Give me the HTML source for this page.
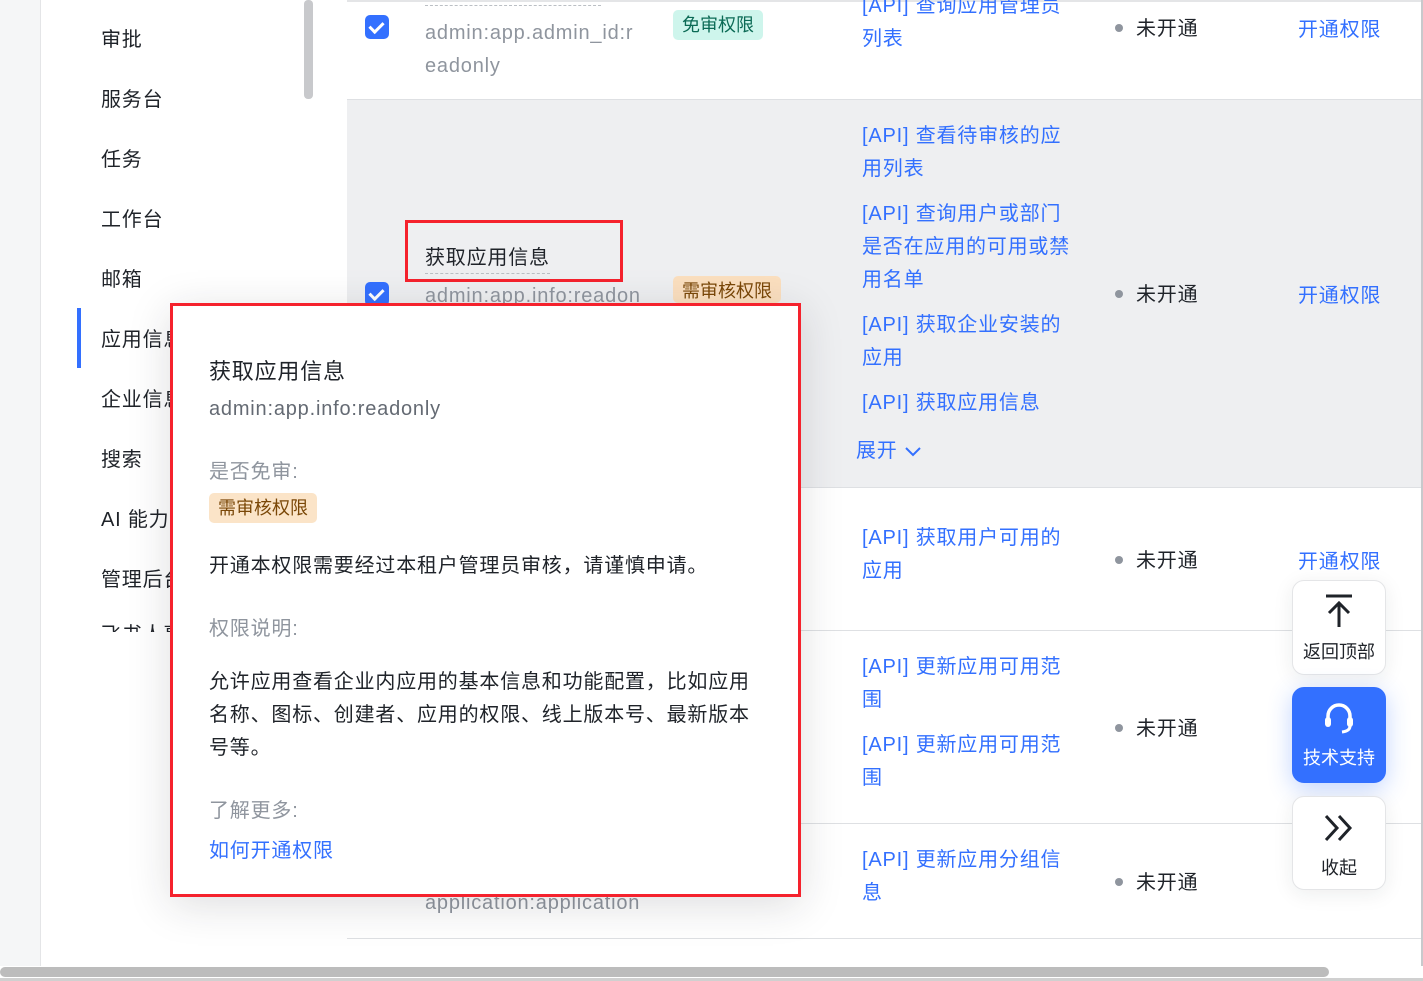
<!DOCTYPE html>
<html><head><meta charset="utf-8"><style>
*{margin:0;padding:0;box-sizing:border-box}
body{width:1423px;height:981px;overflow:hidden;background:#fff;font-family:"Liberation Sans","Noto Sans CJK SC",sans-serif;color:#1f2329;position:relative;letter-spacing:0.8px}
.a{position:absolute;white-space:nowrap}
.t{font-size:20px;line-height:33px}
.blue{color:#3370ff}
.gray{color:#8f959e}
.side{font-size:20px;color:#1f2329;left:101px}
.cb{position:absolute;width:24px;height:24px;border-radius:5px;background:#3370ff}
.cb:after{content:"";position:absolute;left:7px;top:4px;width:6px;height:11px;border:solid #fff;border-width:0 3px 3px 0;transform:rotate(45deg)}
.dot{position:absolute;width:8px;height:8px;border-radius:50%;background:#8f959e;left:1115px}
.st{left:1136px;font-size:20px}
.op{left:1298px;font-size:20px;color:#3370ff}
.hl{position:absolute;left:347px;right:2px;height:1px;background:#dee0e3}
.fb{position:absolute;left:1292px;width:94px;border-radius:12px;background:#fff;border:1px solid #e4e5e7;box-shadow:0 4px 20px rgba(31,35,41,.08);text-align:center;font-size:18px;color:#1f2329;letter-spacing:0}
</style></head><body>
<div class="a" style="left:0;top:0;width:41px;height:966px;background:#f5f6f7;border-right:1px solid #e4e5e7"></div>
<div class="a" style="left:304px;top:0;width:9px;height:99px;background:#c8c9cc;border-radius:4px"></div>
<div class="a side" style="top:23px">审批</div>
<div class="a side" style="top:83px">服务台</div>
<div class="a side" style="top:143px">任务</div>
<div class="a side" style="top:203px">工作台</div>
<div class="a side" style="top:263px">邮箱</div>
<div class="a" style="left:77px;top:308px;width:4px;height:60px;background:#3370ff"></div>
<div class="a side blue" style="top:323px">应用信息</div>
<div class="a side" style="top:383px">企业信息</div>
<div class="a side" style="top:443px">搜索</div>
<div class="a side" style="top:503px">AI 能力</div>
<div class="a side" style="top:563px">管理后台</div>
<div class="a side" style="top:618px;height:14px;overflow:hidden">飞书人事</div>

<div class="a" style="left:347px;top:0;right:2px;height:2px;background:#e4e5e7"></div>
<div class="a" style="left:347px;top:99px;right:2px;height:388px;background:#eeeff1"></div>
<div class="hl" style="top:99px"></div><div class="hl" style="top:487px"></div><div class="hl" style="top:630px"></div><div class="hl" style="top:823px"></div><div class="hl" style="top:938px"></div>

<div class="cb" style="left:365px;top:15px"></div>
<div class="a" style="left:425px;top:5px;width:176px;border-top:1px dashed #bbbfc4"></div>
<div class="a t gray" style="left:425px;top:17px">admin:app.admin_id:r<br>eadonly</div>
<div class="a" style="left:673px;top:10px;padding:0 9px;height:30px;line-height:30px;background:#cef5ec;color:#0b6a55;border-radius:5px;font-size:18px;letter-spacing:0">免审权限</div>
<div class="a t blue" style="left:862px;top:-10px">[API] 查询应用管理员<br>列表</div>
<div class="dot" style="top:24px"></div><div class="a st" style="top:12px">未开通</div><div class="a op" style="top:13px">开通权限</div>

<div class="cb" style="left:365px;top:282px"></div>
<div class="a" style="left:425px;top:243px;font-size:20px;border-bottom:1px dashed #bbbfc4;line-height:30px">获取应用信息</div>
<div class="a" style="left:405px;top:220px;width:218px;height:62px;border:3px solid #f5222d"></div>
<div class="a t gray" style="left:425px;top:280px;height:23px;overflow:hidden">admin:app.info:readon</div>
<div class="a" style="left:673px;top:276px;padding:0 9px;line-height:30px;background:#fbdfbf;color:#7a4707;border-radius:5px;font-size:18px;height:27px;overflow:hidden;letter-spacing:0">需审核权限</div>
<div class="a t blue" style="left:862px;top:120px">[API] 查看待审核的应<br>用列表</div>
<div class="a t blue" style="left:862px;top:198px">[API] 查询用户或部门<br>是否在应用的可用或禁<br>用名单</div>
<div class="a t blue" style="left:862px;top:309px">[API] 获取企业安装的<br>应用</div>
<div class="a t blue" style="left:862px;top:387px">[API] 获取应用信息</div>
<div class="a t blue" style="left:856px;top:435px">展开 <svg width="18" height="12" viewBox="0 0 18 12"><path d="M2 3l7 7 7-7" fill="none" stroke="#3370ff" stroke-width="2"/></svg></div>
<div class="dot" style="top:290px"></div><div class="a st" style="top:278px">未开通</div><div class="a op" style="top:279px">开通权限</div>

<div class="a t blue" style="left:862px;top:522px">[API] 获取用户可用的<br>应用</div>
<div class="dot" style="top:556px"></div><div class="a st" style="top:544px">未开通</div><div class="a op" style="top:545px">开通权限</div>

<div class="a t blue" style="left:862px;top:651px">[API] 更新应用可用范<br>围</div>
<div class="a t blue" style="left:862px;top:729px">[API] 更新应用可用范<br>围</div>
<div class="dot" style="top:724px"></div><div class="a st" style="top:712px">未开通</div>

<div class="a t blue" style="left:862px;top:844px">[API] 更新应用分组信<br>息</div>
<div class="dot" style="top:878px"></div><div class="a st" style="top:866px">未开通</div>
<div class="a t gray" style="left:425px;top:887px">application:application</div>

<div class="a" style="left:170px;top:303px;width:631px;height:594px;background:#fff;border:3px solid #f5222d;box-shadow:0 8px 40px rgba(31,35,41,.15)"></div>
<div class="a" style="left:209px;top:356px;font-size:22px;line-height:32px">获取应用信息</div>
<div class="a" style="left:209px;top:394px;font-size:20px;line-height:30px;color:#646a73">admin:app.info:readonly</div>
<div class="a gray" style="left:209px;top:457px;font-size:20px;line-height:30px">是否免审:</div>
<div class="a" style="left:209px;top:493px;padding:0 9px;height:30px;line-height:30px;background:#fbe4c8;color:#7a4707;border-radius:5px;font-size:18px;letter-spacing:0">需审核权限</div>
<div class="a" style="left:209px;top:550px;font-size:20px;line-height:32px">开通本权限需要经过本租户管理员审核，请谨慎申请。</div>
<div class="a gray" style="left:209px;top:613px;font-size:20px;line-height:32px">权限说明:</div>
<div class="a t" style="left:209px;top:666px">允许应用查看企业内应用的基本信息和功能配置，比如应用<br>名称、图标、创建者、应用的权限、线上版本号、最新版本<br>号等。</div>
<div class="a gray" style="left:209px;top:795px;font-size:20px;line-height:32px">了解更多:</div>
<div class="a blue" style="left:209px;top:835px;font-size:20px;line-height:32px">如何开通权限</div>

<div class="fb" style="top:580px;height:95px"><svg width="32" height="36" viewBox="0 0 32 36" style="margin-top:12px"><path d="M3 3h26M16 10v24M6 20l10-10 10 10" fill="none" stroke="#1f2329" stroke-width="3"/></svg><div style="margin-top:4px">返回顶部</div></div>
<div class="fb" style="top:687px;height:96px;background:#3370ff;border-color:#3370ff;color:#fff;box-shadow:0 6px 24px rgba(51,112,255,.3)"><svg width="34" height="36" viewBox="0 0 34 36" style="margin-top:12px"><path d="M6 20v-4a11 11 0 0 1 22 0v4" fill="none" stroke="#fff" stroke-width="3.5"/><rect x="3" y="17" width="6" height="10" rx="3" fill="#fff"/><rect x="25" y="17" width="6" height="10" rx="3" fill="#fff"/><path d="M28 26q0 5-8 6" fill="none" stroke="#fff" stroke-width="3"/></svg><div style="margin-top:3px">技术支持</div></div>
<div class="fb" style="top:796px;height:94px"><svg width="32" height="30" viewBox="0 0 32 30" style="margin-top:16px"><path d="M3 3l11 12L3 27M16 3l11 12-11 12" fill="none" stroke="#1f2329" stroke-width="3"/></svg><div style="margin-top:6px">收起</div></div>

<div class="a" style="left:1421px;top:0;width:2px;height:981px;background:#c8c9cc"></div>
<div class="a" style="left:0;top:966px;width:1423px;height:15px;background:#fff"></div>
<div class="a" style="left:0;top:967px;width:1329px;height:10px;background:#bcbcbc;border-radius:5px"></div>
<div class="a" style="left:0;top:978px;width:1423px;height:3px;background:#d0d0d0"></div>
</body></html>
